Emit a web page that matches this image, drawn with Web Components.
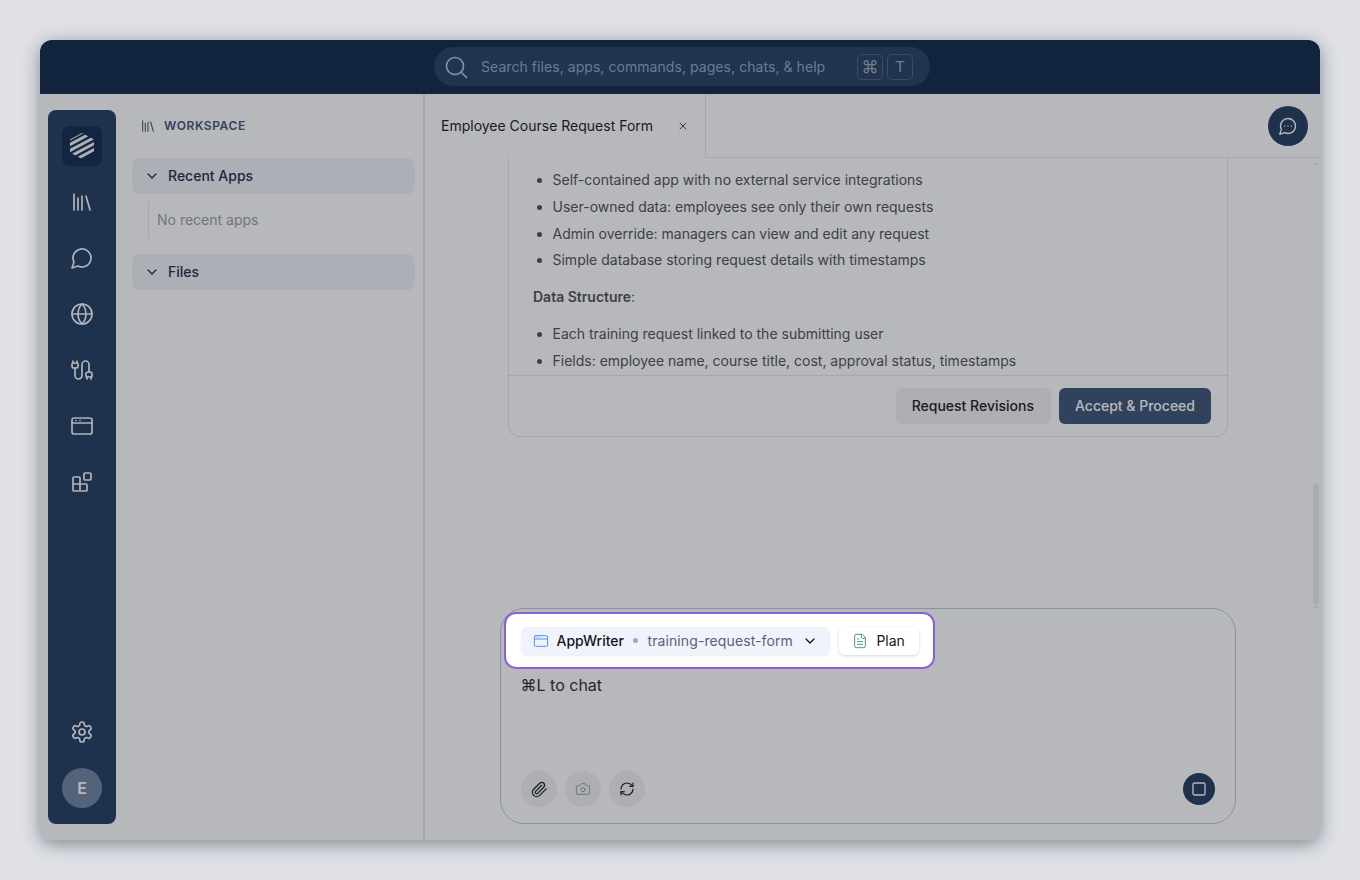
<!DOCTYPE html>
<html>
<head>
<meta charset="utf-8">
<title>Workspace</title>
<style>
  html, body { margin: 0; height: 100%; }
  body {
    background: #dfe1e7;
    font-family: Inter, "Liberation Sans", sans-serif;
    padding: 40px;
    box-sizing: border-box;
    height: 880px;
    overflow: hidden;
  }
</style>
</head>
<body>
<app-window></app-window>

<script>
const icon = (size, body, sw = 2) => `<svg width="${size}" height="${size}" viewBox="0 0 24 24" fill="none" stroke="currentColor" stroke-width="${sw}" stroke-linecap="round" stroke-linejoin="round">${body}</svg>`;

const ICONS = {
  library: '<path d="m16 6 4 14"/><path d="M12 6v14"/><path d="M8 8v12"/><path d="M4 4v16"/>',
  chat: '<path d="M7.9 20A9 9 0 1 0 4 16.1L2 22Z"/>',
  chatDots: '<path d="M7.9 20A9 9 0 1 0 4 16.1L2 22Z"/><path d="M8 12h.01"/><path d="M12 12h.01"/><path d="M16 12h.01"/>',
  globe: '<circle cx="12" cy="12" r="10"/><path d="M12 2a14.5 14.5 0 0 0 0 20 14.5 14.5 0 0 0 0-20"/><path d="M2 12h20"/>',
  cable: '<path d="M17 19a1 1 0 0 1-1-1v-2a2 2 0 0 1 2-2h2a2 2 0 0 1 2 2v2a1 1 0 0 1-1 1z"/><path d="M17 21v-2"/><path d="M19 14V6.5a1 1 0 0 0-7 0v11a1 1 0 0 1-7 0V10"/><path d="M21 21v-2"/><path d="M3 5V3"/><path d="M4 10a2 2 0 0 1-2-2V6a1 1 0 0 1 1-1h4a1 1 0 0 1 1 1v2a2 2 0 0 1-2 2Z"/><path d="M7 5V3"/>',
  browser: '<rect x="2" y="4" width="20" height="16" rx="2"/><path d="M2 9h20"/><path d="M6 6.5h.01"/><path d="M10 6.5h.01"/>',
  blocks: '<rect x="14" y="3" width="7" height="7" rx="1"/><path d="M10 21V8a1 1 0 0 0-1-1H4a1 1 0 0 0-1 1v12a1 1 0 0 0 1 1h12a1 1 0 0 0 1-1v-5a1 1 0 0 0-1-1H3"/>',
  settings: '<path d="M12.22 2h-.44a2 2 0 0 0-2 2v.18a2 2 0 0 1-1 1.73l-.43.25a2 2 0 0 1-2 0l-.15-.08a2 2 0 0 0-2.73.73l-.22.38a2 2 0 0 0 .73 2.73l.15.1a2 2 0 0 1 1 1.72v.51a2 2 0 0 1-1 1.74l-.15.09a2 2 0 0 0-.73 2.73l.22.38a2 2 0 0 0 2.73.73l.15-.08a2 2 0 0 1 2 0l.43.25a2 2 0 0 1 1 1.73V20a2 2 0 0 0 2 2h.44a2 2 0 0 0 2-2v-.18a2 2 0 0 1 1-1.73l.43-.25a2 2 0 0 1 2 0l.15.08a2 2 0 0 0 2.73-.73l.22-.39a2 2 0 0 0-.73-2.73l-.15-.08a2 2 0 0 1-1-1.74v-.5a2 2 0 0 1 1-1.74l.15-.09a2 2 0 0 0 .73-2.73l-.22-.38a2 2 0 0 0-2.73-.73l-.15.08a2 2 0 0 1-2 0l-.43-.25a2 2 0 0 1-1-1.73V4a2 2 0 0 0-2-2z"/><circle cx="12" cy="12" r="3"/>',
  chevron: '<path d="m6 9 6 6 6-6"/>',
  close: '<path d="M18 6 6 18"/><path d="m6 6 12 12"/>',
  search: '<circle cx="11" cy="11" r="8.5"/><path d="m22.500 22.500-5.300-5.300"/>',
  clip: '<path d="m21.44 11.05-9.19 9.19a6 6 0 0 1-8.49-8.49l8.57-8.57A4 4 0 1 1 18 8.84l-8.59 8.57a2 2 0 0 1-2.83-2.83l8.49-8.48"/>',
  camera: '<path d="M14.5 4h-5L7 7H4a2 2 0 0 0-2 2v9a2 2 0 0 0 2 2h16a2 2 0 0 0 2-2V9a2 2 0 0 0-2-2h-3l-2.5-3z"/><circle cx="12" cy="13" r="3"/>',
  refresh: '<path d="M3 12a9 9 0 0 1 9-9 9.75 9.75 0 0 1 6.74 2.74L21 8"/><path d="M21 3v5h-5"/><path d="M21 12a9 9 0 0 1-9 9 9.75 9.75 0 0 1-6.74-2.74L3 16"/><path d="M8 16H3v5"/>',
  file: '<path d="M15 2H6a2 2 0 0 0-2 2v16a2 2 0 0 0 2 2h12a2 2 0 0 0 2-2V7Z"/><path d="M14 2v4a2 2 0 0 0 2 2h4"/><path d="M10 9H8"/><path d="M16 13H8"/><path d="M16 17H8"/>',
  stop: '<rect x="4" y="4" width="16" height="16" rx="2"/>'
};

class TopBar extends HTMLElement {
  constructor() {
    super();
    this.attachShadow({mode: 'open'});
  }
  connectedCallback() {
    this.shadowRoot.innerHTML = `
      <style>
        :host { display: flex; justify-content: center; align-items: center; box-sizing: border-box; height: 54px; padding-bottom: 1px; background: #132c4a; flex: none; }
        .search {
          display: flex; align-items: center; box-sizing: border-box;
          width: 496px; height: 39px; margin-left: 4px; padding: 0 17px 0 9.500px;
          background: #294263; border-radius: 20px; color: #97a7bc; font-size: 14px;
        }
        svg { color: #bfcbd8; flex: none; }
        span.label { margin-left: 13.500px; flex: 1; white-space: nowrap; letter-spacing: .06px; }
        kbd {
          box-sizing: border-box; width: 26px; height: 26px; margin-left: 4px;
          display: flex; align-items: center; justify-content: center;
          border: 1px solid #506584; border-radius: 5px;
          font: 14px Inter, "DejaVu Sans", sans-serif; color: #a0aebc;
        }
        kbd.cmd { font-size: 17px; }
      </style>
      <div class="search">
        ${icon(24, ICONS.search, 1.6)}
        <span class="label">Search files, apps, commands, pages, chats, &amp; help</span>
        <kbd class="cmd">⌘</kbd><kbd>T</kbd>
      </div>`;
  }
}
customElements.define('top-bar', TopBar);

class SideRail extends HTMLElement {
  constructor() {
    super();
    this.attachShadow({mode: 'open'});
  }
  connectedCallback() {
    const items = ['library', 'chat', 'globe', 'cable', 'browser', 'blocks'];
    this.shadowRoot.innerHTML = `
      <style>
        :host {
          display: flex; flex-direction: column; align-items: center; box-sizing: border-box;
          width: 68px; margin: 16px 0 16px 8px; padding: 16px 0; flex: none;
          background: #243f62; border-radius: 8px; color: #f6f8fa;
        }
        .logo { width: 40px; height: 40px; background: #152d4f; border-radius: 8px; display: flex; align-items: center; justify-content: center; margin-bottom: 8px; }
        .item { width: 40px; height: 40px; margin-top: 16px; display: flex; align-items: center; justify-content: center; }
        .logo + .item { margin-top: 8px; }
        .spacer { flex: 1; }
        .avatar { width: 40px; height: 40px; margin-top: 16px; border-radius: 50%; background: #7286a0; color: #fff; display: flex; align-items: center; justify-content: center; font-size: 16px; font-weight: 600; }
      </style>
      <div class="logo">
        <svg width="24" height="26" viewBox="0 0 24 26">
          <defs><clipPath id="hex"><path d="M12 0 24 6.500V19.500L12 26 0 19.500V6.500Z"/></clipPath></defs>
          <g clip-path="url(#hex)" stroke="#f2f3f5" stroke-width="3">
            <path d="M-2 7 22-6"/><path d="M-2 12.500 28-3.500"/><path d="M-2 18.500 28 2.500"/><path d="M-2 24.500 28 8.500"/><path d="M2 28.500 28 14.500"/>
          </g>
        </svg>
      </div>
      ${items.map(n => `<div class="item">${icon(24, ICONS[n], 1.7)}</div>`).join('')}
      <div class="spacer"></div>
      <div class="item">${icon(24, ICONS.settings, 1.7)}</div>
      <div class="avatar">E</div>`;
  }
}
customElements.define('side-rail', SideRail);

class FoldSection extends HTMLElement {
  constructor() {
    super();
    this.attachShadow({mode: 'open'});
  }
  connectedCallback() {
    this.shadowRoot.innerHTML = `
      <style>
        :host { display: block; }
        .head {
          display: flex; align-items: center; box-sizing: border-box; height: 36px; padding: 0 0 1px 12px;
          background: #f1f3f6; border-radius: 8px; color: #1f324c; font-size: 14px; font-weight: 500;
        }
        svg { margin-right: 8px; }
        .body { padding: 8px 0 16px 16px; }
      </style>
      <div class="head">${icon(16, ICONS.chevron, 2)}${this.getAttribute('title')}</div>
      <div class="body"><slot></slot></div>`;
    if (!this.children.length) this.shadowRoot.querySelector('.body').style.display = 'none';
  }
}
customElements.define('fold-section', FoldSection);

class WorkspacePanel extends HTMLElement {
  constructor() {
    super();
    this.attachShadow({mode: 'open'});
  }
  connectedCallback() {
    this.shadowRoot.innerHTML = `
      <style>
        :host {
          display: block; box-sizing: border-box; width: 309px; flex: none;
          padding: 0 8px 0 16px; border-right: 2px solid #e5e7eb;
        }
        .title { display: flex; align-items: center; box-sizing: border-box; height: 64px; padding: 0 0 1px 8px; color: #445773; font-size: 12px; font-weight: 600; letter-spacing: .6px; }
        .title svg { margin-right: 8px; }
      </style>
      <div class="title">${icon(16, ICONS.library, 1.6)}WORKSPACE</div>
      <fold-section title="Recent Apps"><div style="box-sizing:border-box;border-left:1px solid #e5e7eb;height:36px;display:flex;align-items:center;padding:0 0 1px 8px;color:#9aa0ac;font-size:14px">No recent apps</div></fold-section>
      <fold-section title="Files"></fold-section>`;
  }
}
customElements.define('workspace-panel', WorkspacePanel);

class TabBar extends HTMLElement {
  constructor() {
    super();
    this.attachShadow({mode: 'open'});
  }
  connectedCallback() {
    this.shadowRoot.innerHTML = `
      <style>
        :host { display: flex; height: 64px; flex: none; }
        .tab { display: flex; align-items: center; box-sizing: border-box; width: 281px; padding: 0 16px 1px; border-right: 1px solid #e5e7eb; color: #1b1d20; font-size: 14px; }
        .tab span { flex: 1; }
        .rest { flex: 1; display: flex; align-items: center; justify-content: flex-end; padding-right: 12px; border-bottom: 1px solid #e5e7eb; }
        .chat { width: 40px; height: 40px; border-radius: 50%; background: #243f62; color: #fff; display: flex; align-items: center; justify-content: center; }
      </style>
      <div class="tab"><span>Employee Course Request Form</span>${icon(12, ICONS.close, 1.600)}</div>
      <div class="rest"><div class="chat">${icon(20, ICONS.chatDots, 1.600)}</div></div>`;
  }
}
customElements.define('tab-bar', TabBar);

class PlanCard extends HTMLElement {
  constructor() {
    super();
    this.attachShadow({mode: 'open'});
  }
  connectedCallback() {
    this.shadowRoot.innerHTML = `
      <style>
        :host {
          display: block; box-sizing: border-box; width: 720px; margin: 0 auto; flex: none;
          border: 1px solid #e5e7eb; border-top: 0; border-radius: 0 0 12px 12px;
          color: #515456; font-size: 14px;
        }
        .scroll { height: 218px; overflow: hidden; box-sizing: border-box; padding: 9px 24px 0; border-bottom: 1px solid #e5e7eb; }
        ul { margin: 0; padding-left: 19.500px; }
        li { line-height: 26.800px; }
        p { margin: 10px 0 11px; line-height: 26px; }
        strong { font-weight: 600; }
        .actions { display: flex; justify-content: flex-end; gap: 8px; padding: 12px 16px; }
        button { height: 36px; padding: 0 16px 2px; border: 0; border-radius: 6px; font: inherit; font-weight: 500; }
        .ghost { background: #f2f2f3; color: #1f2024; padding-right: 17px; }
        .primary { background: #405778; color: #fff; }
      </style>
      <div class="scroll">
        <ul>
          <li>Self-contained app with no external service integrations</li>
          <li>User-owned data: employees see only their own requests</li>
          <li>Admin override: managers can view and edit any request</li>
          <li>Simple database storing request details with timestamps</li>
        </ul>
        <p><strong>Data Structure</strong>:</p>
        <ul>
          <li>Each training request linked to the submitting user</li>
          <li>Fields: employee name, course title, cost, approval status, timestamps</li>
        </ul>
      </div>
      <div class="actions">
        <button class="ghost">Request Revisions</button>
        <button class="primary">Accept &amp; Proceed</button>
      </div>`;
  }
}
customElements.define('plan-card', PlanCard);

class ChatComposer extends HTMLElement {
  constructor() {
    super();
    this.attachShadow({mode: 'open'});
  }
  connectedCallback() {
    this.shadowRoot.innerHTML = `
      <style>
        :host {
          display: flex; flex-direction: column; box-sizing: border-box; width: 736px; height: 216px; margin: 0 auto 16px; flex: none;
          border: 1px solid #bec8d8; border-radius: 24px; padding: 3px 0 0 3px;
        }
        .spot {
          position: relative; z-index: 20; box-sizing: border-box; align-self: flex-start;
          display: flex; align-items: center; gap: 9px; width: 431px; height: 57px; padding: 0 0 0 14.500px;
          background: #fff; border: 2px solid #8c5fd6; border-radius: 12px; white-space: nowrap;
        }
        .target { display: flex; flex: none; align-items: center; height: 28px; padding: 0 12px; background: #eff3fb; border-radius: 6px; font-size: 14px; box-shadow: 0 1px 2px rgba(0,0,0,.08); color: #14171c; }
        .target .app { font-weight: 500; margin-left: 8px; }
        .target .dot { width: 5px; height: 5px; border-radius: 50%; background: #a2a8b4; margin: 0 9.500px 0 9px; }
        .target .slug { color: #58627a; margin-right: 9.500px; letter-spacing: .1px; }
        .target .blue { color: #5b8def; display: flex; }
        .plan { display: flex; flex: none; align-items: center; height: 28px; padding: 0 14px 0 13px; background: #fff; border-radius: 6px; font-size: 14px; color: #14171c; box-shadow: 0 1px 3px rgba(0,0,0,.18); }
        .plan svg { color: #4f9d78; margin-right: 8px; }
        .hint { margin: 6px 0 0 16.500px; color: #2f2f2e; font-size: 16px; font-family: Inter, "DejaVu Sans", sans-serif; line-height: 20px; flex: 1; }
        .tools { display: flex; align-items: center; gap: 8px; padding: 0 20px 16px 17px; }
        .tool { width: 36px; height: 36px; border-radius: 50%; background: #f2f2f3; display: flex; align-items: center; justify-content: center; color: #21252a; }
        .tool.off { color: #9aa0ac; }
        .spacer { flex: 1; }
        .stop { width: 32px; height: 32px; border-radius: 50%; background: #243f62; color: #fff; display: flex; align-items: center; justify-content: center; }
      </style>
      <div class="spot">
        <div class="target">
          <span class="blue">${icon(16, ICONS.browser, 1.500)}</span>
          <span class="app">AppWriter</span><span class="dot"></span><span class="slug">training-request-form</span>
          ${icon(16, ICONS.chevron, 2)}
        </div>
        <div class="plan">${icon(16, ICONS.file, 1.500)}Plan</div>
      </div>
      <div class="hint">⌘L to chat</div>
      <div class="tools">
        <div class="tool">${icon(17, ICONS.clip, 1.800)}</div>
        <div class="tool off">${icon(16, ICONS.camera, 1.500)}</div>
        <div class="tool">${icon(16, ICONS.refresh, 1.800)}</div>
        <div class="spacer"></div>
        <div class="stop">${icon(18, ICONS.stop, 1.800)}</div>
      </div>`;
  }
}
customElements.define('chat-composer', ChatComposer);

class MainPane extends HTMLElement {
  constructor() {
    super();
    this.attachShadow({mode: 'open'});
  }
  connectedCallback() {
    this.shadowRoot.innerHTML = `
      <style>
        :host { display: flex; flex-direction: column; flex: 1; min-width: 0; }
        .row { display: flex; flex: 1; min-height: 0; }
        .col { flex: 1; display: flex; flex-direction: column; min-width: 0; }
        .gap { flex: 1; }
        .bar { width: 9px; flex: none; display: flex; flex-direction: column; align-items: center; padding-top: 4px; }
        .tri { width: 0; height: 0; border-left: 3px solid transparent; border-right: 3px solid transparent; border-bottom: 3px solid #ededee; }
        .thumb { width: 6px; height: 120px; margin-top: 319px; background: #ededee; border-radius: 3px; }
        .tri.down { margin-top: 2px; border-bottom: 0; border-top: 3px solid #ededee; }
      </style>
      <tab-bar></tab-bar>
      <div class="row">
        <div class="col">
          <plan-card></plan-card>
          <div class="gap"></div>
          <chat-composer></chat-composer>
        </div>
        <div class="bar">
          <div class="tri"></div>
          <div class="thumb"></div>
          <div class="tri down"></div>
        </div>
      </div>`;
  }
}
customElements.define('main-pane', MainPane);

class AppWindow extends HTMLElement {
  constructor() {
    super();
    this.attachShadow({mode: 'open'});
  }
  connectedCallback() {
    this.shadowRoot.innerHTML = `
      <style>
        :host {
          display: flex; flex-direction: column; position: relative; z-index: 0;
          width: 1280px; height: 800px; background: #fff; border-radius: 12px;
          box-shadow: 0 4px 18px rgba(17,24,39,.45);
        }
        .clip { display: flex; flex-direction: column; flex: 1; min-height: 0; border-radius: 12px; overflow: hidden; }
        .body { display: flex; flex: 1; min-height: 0; }
        .veil { position: absolute; inset: 0; z-index: 10; border-radius: 12px; background: rgba(16,21,34,.3); }
      </style>
      <div class="clip">
        <top-bar></top-bar>
        <div class="body">
          <side-rail></side-rail>
          <workspace-panel></workspace-panel>
          <main-pane></main-pane>
        </div>
      </div>
      <div class="veil"></div>`;
  }
}
customElements.define('app-window', AppWindow);
</script>
</body>
</html>
